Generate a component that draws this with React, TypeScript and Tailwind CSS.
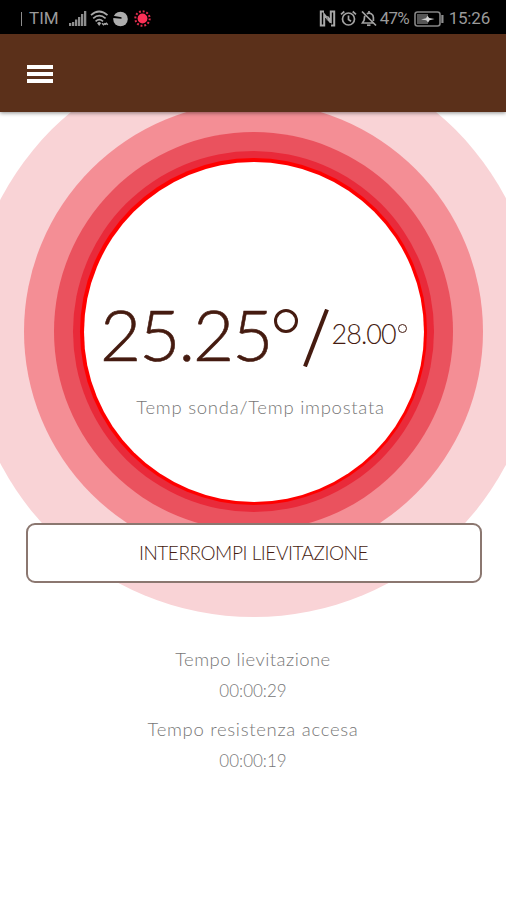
import type { ReactNode } from "react";

interface RingProps {
  className: string;
  children: ReactNode;
}

interface TimerProps {
  label: string;
  value: string;
  labelClass: string;
}

function Ring({ className, children }: RingProps) {
  return (
    <div
      className={`flex shrink-0 items-center justify-center rounded-full ${className}`}
    >
      {children}
    </div>
  );
}

function SignalIcon() {
  return (
    <svg width="18" height="17" viewBox="0 0 18 17" fill="#8d8d8d">
      <rect x="0" y="13" width="2.3" height="3" />
      <rect x="3" y="12" width="2.3" height="4" />
      <rect x="6" y="9.5" width="2.3" height="6.5" />
      <rect x="9" y="7" width="2.3" height="9" />
      <rect x="12" y="4" width="2.3" height="12" />
      <rect x="15" y="1" width="2.3" height="15" />
    </svg>
  );
}

function WifiIcon() {
  return (
    <svg width="19" height="17" viewBox="0 0 19 17" fill="none">
      <g stroke="#a8a8a8" strokeWidth="1.7">
        <path d="M1 5.2Q9 -2.2 17.5 5.2" />
        <path d="M3.2 8.4Q9.2 3 15.6 8.4" />
        <path d="M5.6 11.3Q9.2 8 13 11.3" />
      </g>
      <path d="M7 13l2.2-1.2 2 1.2-2 3z" fill="#a8a8a8" />
      <path
        d="M12 13.2l1.6 1.6 1.6-1.6M15 14.8l1.3-1.6 1.5 1.6"
        stroke="#a8a8a8"
        strokeWidth="1.4"
      />
    </svg>
  );
}

function DialIcon() {
  return (
    <svg width="15" height="16" viewBox="0 0 15 16">
      <circle cx="7.5" cy="8" r="7.3" fill="#adadad" />
      <path d="M0 4.8L8.5 6.2v1.6L0 7z" fill="#000" />
    </svg>
  );
}

function VirusIcon() {
  return (
    <svg width="17" height="17" viewBox="0 0 17 17">
      <circle cx="8.5" cy="8.5" r="4.9" fill="#ff3158" />
      <circle
        cx="8.5"
        cy="8.5"
        r="7.2"
        fill="none"
        stroke="#e02d4d"
        strokeWidth="2"
        strokeDasharray="1.9 1.87"
      />
    </svg>
  );
}

function NfcIcon() {
  return (
    <svg width="17" height="17" viewBox="0 0 17 17" fill="none">
      <path
        d="M5 1.5H1.8v14h3.4V4.5l6.6 8M12 15.5h3.2v-14h-3.4v9.5L8.3 6.5"
        stroke="#a8a8a8"
        strokeWidth="2"
      />
      <path d="M8.2 6.5v4" stroke="#777" strokeWidth="1" />
    </svg>
  );
}

function AlarmIcon() {
  return (
    <svg
      width="17"
      height="17"
      viewBox="0 0 17 17"
      fill="none"
      stroke="#a3a3a3"
      strokeWidth="1.7"
    >
      <circle cx="8.5" cy="9" r="6" />
      <path d="M8.5 5.5v4l2.5 1.7M1 4.3l3.3-2.8M12.7 1.5L16 4.3" />
    </svg>
  );
}

function BellOffIcon() {
  return (
    <svg
      width="16"
      height="17"
      viewBox="0 0 16 17"
      fill="none"
      stroke="#a3a3a3"
      strokeWidth="1.7"
    >
      <path d="M5.8 3.8C9.3 2 12.4 4.5 12.4 7.5V11M3.8 5.8C3.2 7.2 3.6 9 3 10.4L1.4 13H12.5M8 1v2M1 1.5l14 14" />
      <path d="M6 15.2h3.5" />
    </svg>
  );
}

function BatteryIcon() {
  return (
    <svg width="30" height="16" viewBox="0 0 30 16" fill="none">
      <rect x="1" y="1" width="25" height="14" rx="2.5" stroke="#858585" strokeWidth="1.6" />
      <rect x="3" y="3" width="11" height="10" fill="#555" />
      <rect x="27.3" y="4" width="2.2" height="8" fill="#8d8d8d" />
      <path d="M7 8.5l5-1.2 1.5-2.6 1.7 2.2 5.3 1-5 1.3-1.4 2.4-1.8-2.3z" fill="#d0d0d0" />
    </svg>
  );
}

function StatusBar() {
  return (
    <div className="flex h-[34px] items-center bg-black pt-[3px] pr-4 pl-[21px] font-[Roboto,sans-serif] text-[17px] text-[#9a9a9a]">
      <span className="h-[14px] w-px bg-[#8d8d8d]" />
      <span className="ml-[7px] w-[40px]">TIM</span>
      <SignalIcon />
      <span className="ml-[3px]">
        <WifiIcon />
      </span>
      <span className="ml-[4px]">
        <DialIcon />
      </span>
      <span className="ml-[6px]">
        <VirusIcon />
      </span>
      <div className="ml-auto flex items-center">
        <NfcIcon />
        <span className="ml-[4px]">
          <AlarmIcon />
        </span>
        <span className="ml-[4px]">
          <BellOffIcon />
        </span>
        <span className="ml-[3px] w-[34px] tracking-[-0.7px]">47%</span>
        <BatteryIcon />
        <span className="ml-[5px] tracking-[-0.2px]">15:26</span>
      </div>
    </div>
  );
}

function AppBar() {
  return (
    <header className="relative z-10 flex h-[78px] items-center bg-[#5b301a] pt-px pl-[27px] shadow-[0_1px_4px_rgba(0,0,0,0.45)]">
      <button aria-label="Menu" className="flex w-[26px] flex-col gap-[3px]">
        <span className="h-1 w-full bg-white" />
        <span className="h-1 w-full bg-white" />
        <span className="h-1 w-full bg-white" />
      </button>
    </header>
  );
}

function TemperatureDial() {
  return (
    <Ring className="size-[571px] bg-[#f9d3d6]">
      <Ring className="size-[459px] bg-[#f48e95]">
        <Ring className="size-[399px] bg-[#ea525e]">
          <Ring className="size-[361px] bg-[#e92a3a]">
            <Ring className="size-[347px] bg-[#ff0000]">
              <Ring className="size-[340px] flex-col bg-white">
                <div className="mt-[45px] flex h-[84px] items-center whitespace-nowrap text-[#451b10]">
                  <span className="mt-[4px] text-[71px] leading-none font-light tracking-[-2px] [-webkit-text-stroke:0.6px_#451b10]">
                    25.25
                  </span>
                  <span className="mt-[-22px] mr-[5px] ml-[3px] size-6 rounded-full border-[3px] border-[#451b10]" />
                  <svg className="mt-[13px]" width="26" height="58" viewBox="0 0 26 58">
                    <path d="M2 57.5L24 0.5" stroke="#451b10" strokeWidth="4" />
                  </svg>
                  <span className="mt-[4px] ml-[2px] text-[27px] leading-none font-light tracking-[-0.9px]">
                    28.00
                  </span>
                  <span className="mt-[-7px] ml-[2px] size-[9px] rounded-full border border-[#451b10]" />
                </div>
                <p className="mt-[21px] ml-[14px] text-[18.5px] leading-6 font-light tracking-[0.75px] text-[#777]">
                  Temp sonda/Temp impostata
                </p>
              </Ring>
            </Ring>
          </Ring>
        </Ring>
      </Ring>
    </Ring>
  );
}

function Timer({ label, value, labelClass }: TimerProps) {
  return (
    <div className="flex h-[70px] flex-col items-center text-[18.5px] font-light text-[#777]">
      <p className={`leading-[31px] ${labelClass}`}>{label}</p>
      <p className="text-[17px] leading-[31px]">{value}</p>
    </div>
  );
}

export default function App() {
  return (
    <div className="h-[900px] w-[506px] overflow-hidden bg-white font-[Lato,sans-serif]">
      <StatusBar />
      <AppBar />
      <main className="flex h-[788px] flex-col items-center overflow-hidden">
        <div className="-mt-[66px] flex w-full shrink-0 justify-center pl-px">
          <TemperatureDial />
        </div>
        <button className="relative -mt-[94px] ml-px h-[60px] w-[456px] shrink-0 rounded-[9px] border-2 border-[#8b7770] bg-white text-[19px] font-light tracking-[-0.45px] text-[#451b10]">
          INTERROMPI LIEVITAZIONE
        </button>
        <div className="mt-[61px] flex flex-col">
          <Timer
            label="Tempo lievitazione"
            value="00:00:29"
            labelClass="tracking-[0.45px]"
          />
          <Timer
            label="Tempo resistenza accesa"
            value="00:00:19"
            labelClass="tracking-[0.7px]"
          />
        </div>
      </main>
    </div>
  );
}
